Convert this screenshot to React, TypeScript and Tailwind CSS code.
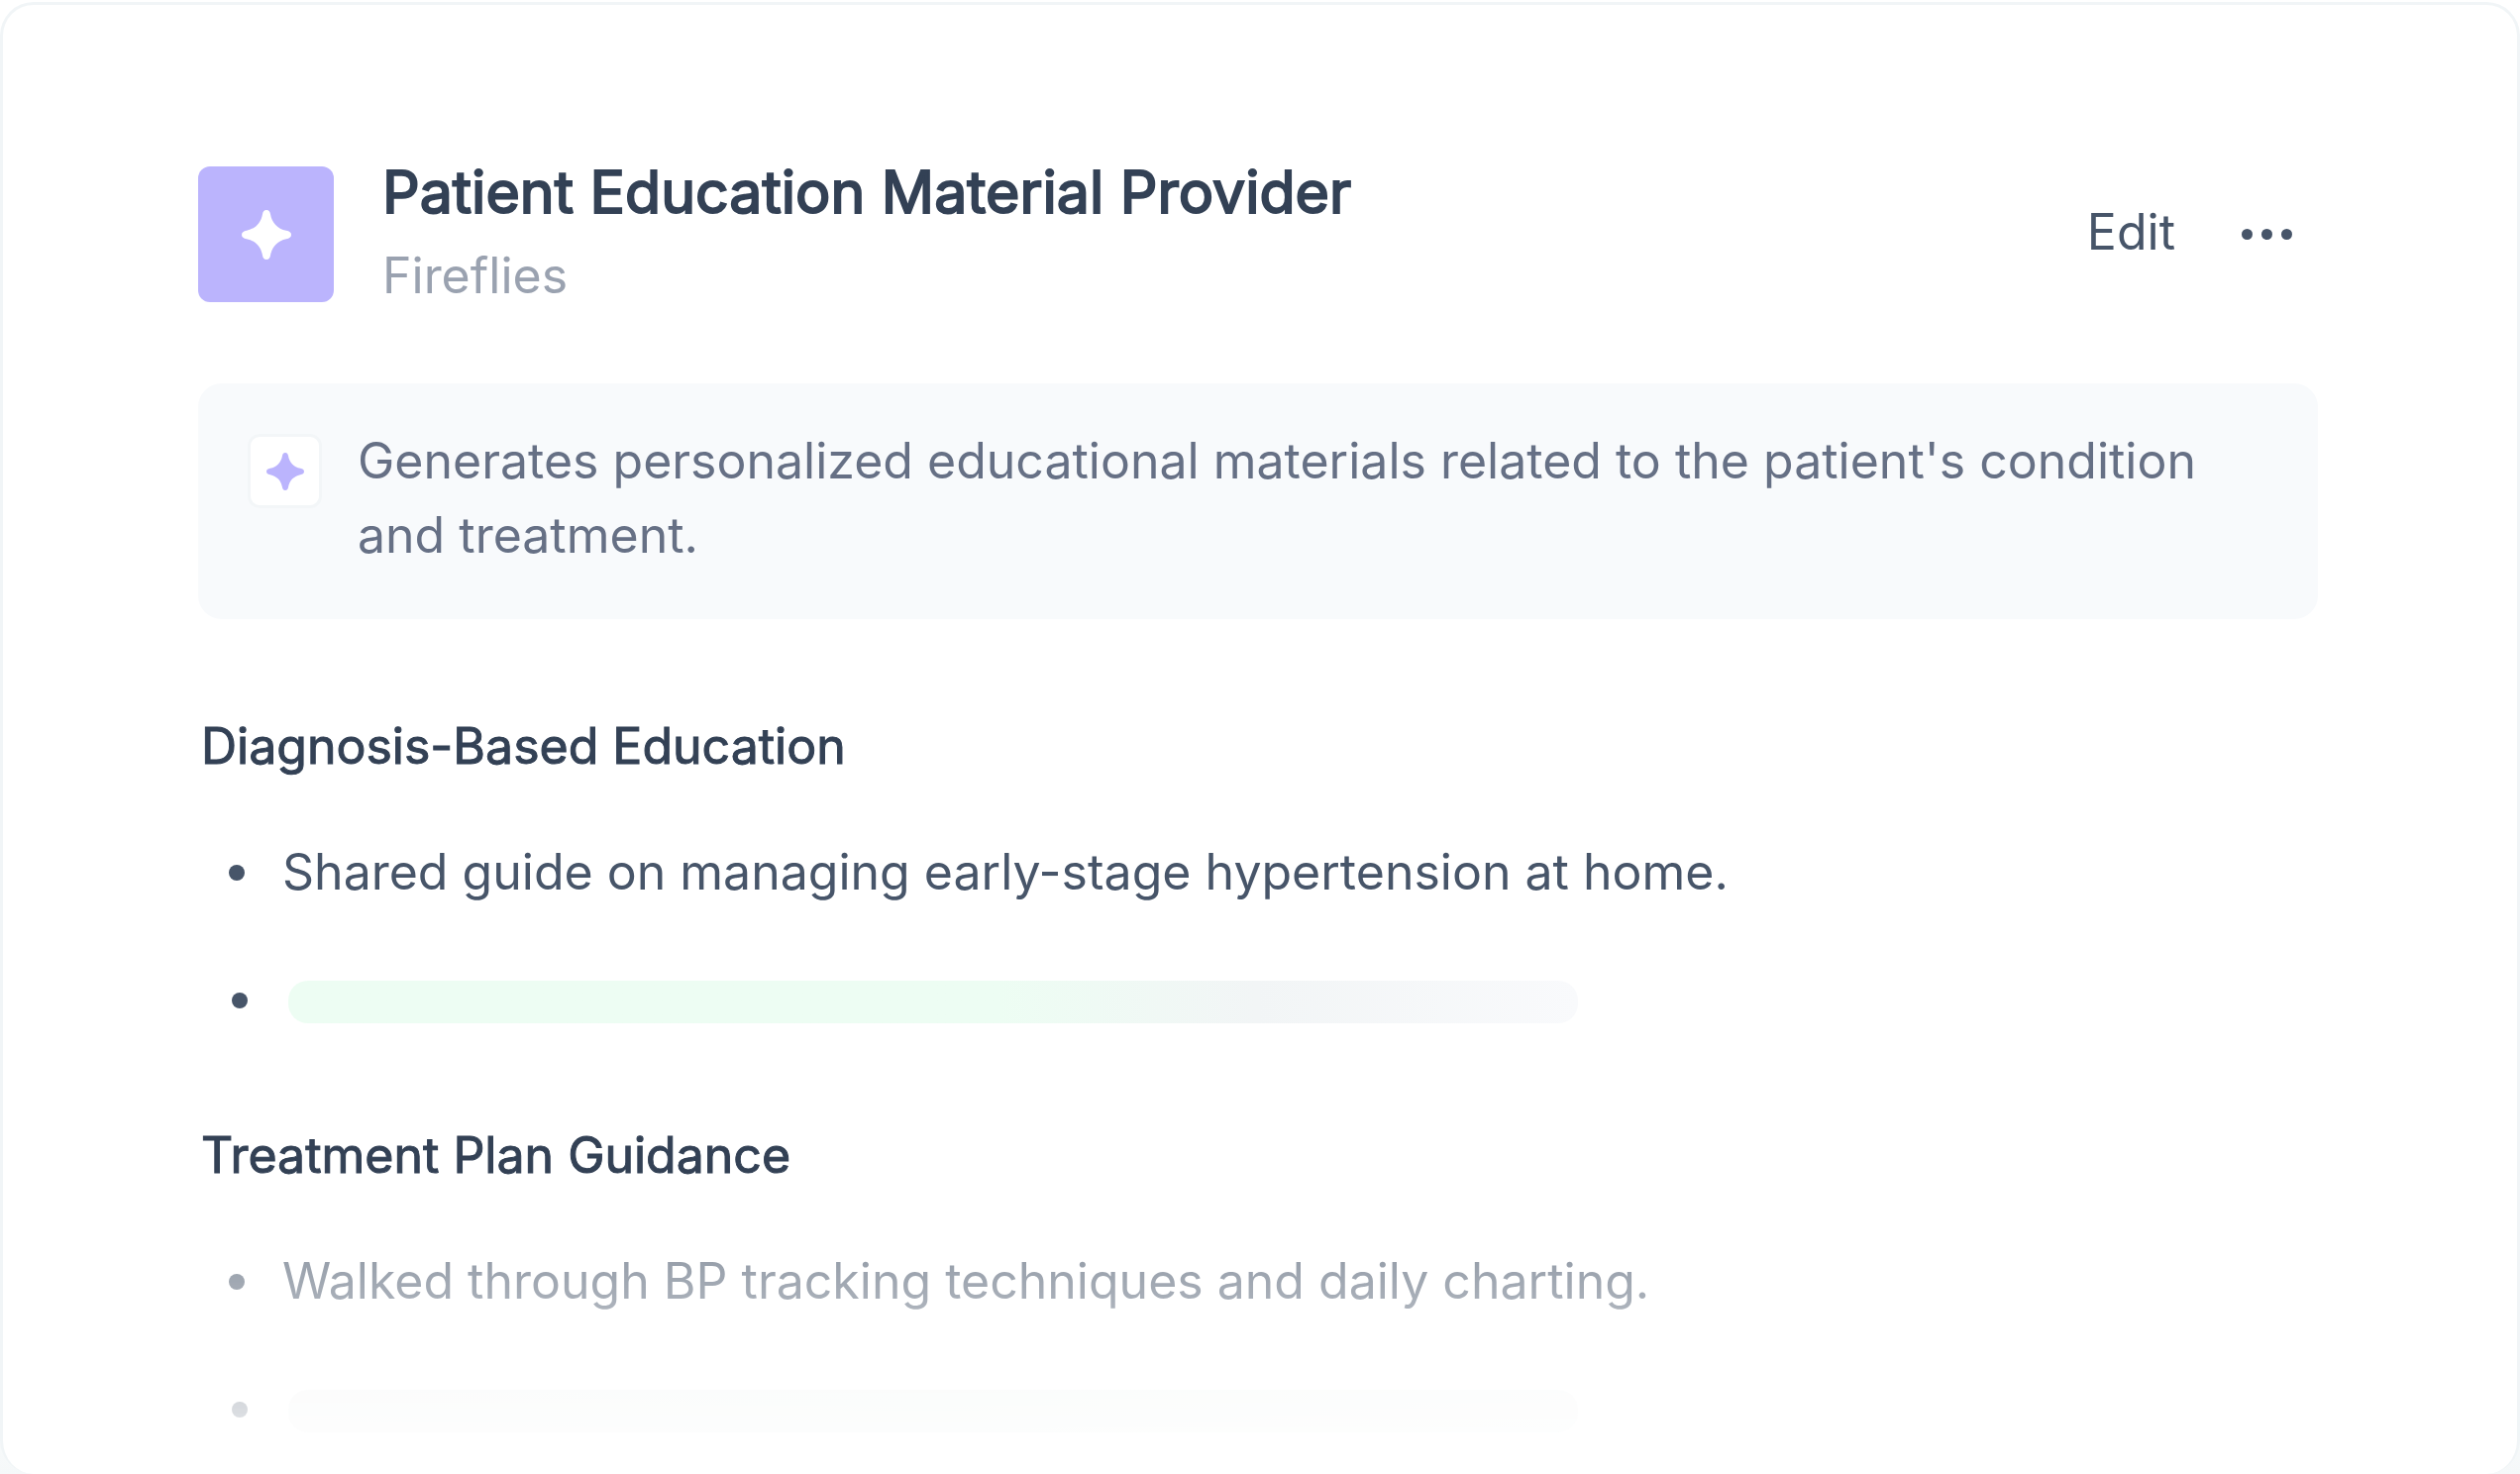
import type { ReactNode } from 'react';

const sections = [
  {
    title: 'Diagnosis-Based Education',
    item: 'Shared guide on managing early-stage hypertension at home.',
    faded: false,
  },
  {
    title: 'Treatment Plan Guidance',
    item: 'Walked through BP tracking techniques and daily charting.',
    faded: true,
  },
];

function Spark({ className }: { className: string }) {
  return (
    <svg viewBox="0 0 50 50" className={className} fill="currentColor" aria-hidden="true">
      <path d="M25 0C27.6 0 28.6 1.8 29 4.2C30.6 13 36 18.8 45 20.8C48 21.4 50 22.5 50 25C50 27.5 48 28.6 45 29.2C36 31.2 30.6 37 29 45.8C28.6 48.2 27.6 50 25 50C22.4 50 21.4 48.2 21 45.8C19.4 37 14 31.2 5 29.2C2 28.6 0 27.5 0 25C0 22.5 2 21.4 5 20.8C14 18.8 19.4 13 21 4.2C21.4 1.8 22.4 0 25 0Z" />
    </svg>
  );
}

function Bullet() {
  return <span className="size-4 shrink-0 rounded-full bg-[#475569]" />;
}

function Item({ children }: { children: ReactNode }) {
  return (
    <li className="flex items-center gap-[38px] pl-[31px]">
      <Bullet />
      <span>{children}</span>
    </li>
  );
}

// line that is still being written
function LoadingItem({ faded }: { faded: boolean }) {
  return (
    <li className="flex h-[75px] items-center gap-[41px] pl-[34px]">
      <Bullet />
      <span
        className={`mt-1 h-[43px] w-[1302px] rounded-[20px] ${
          faded
            ? 'bg-linear-to-r from-[#f2f4f4] via-[#eef5f1] to-[#f5f7f7]'
            : 'bg-linear-to-r from-[#edfdf3] from-55% via-[#f2f5f6] via-75% to-[#f9fafc]'
        }`}
      />
    </li>
  );
}

export default function App() {
  return (
    <div className="flex min-h-screen flex-col bg-linear-to-b from-white from-90% to-[#f5f8f9] pt-[2px] font-['Inter',sans-serif] [font-optical-sizing:none]">
      <main className="flex-1 rounded-[34px] border-[3px] border-b-0 border-[#f1f5f7] bg-white pt-[152px] pr-[201px] pl-[197px] text-[50px] leading-[75px] text-[#475569]">
        <header className="flex items-center">
          <div className="flex size-[137px] shrink-0 items-center justify-center rounded-xl bg-[#bbb4fd] text-white">
            <Spark className="size-[50px]" />
          </div>
          <div className="ml-[49px] flex-1">
            <h1 className="text-[59px] leading-[74px] text-[#334155] [-webkit-text-stroke:2px]">
              Patient Education Material Provider
            </h1>
            <p className="mt-[10px] text-[#9aa2b0]">Fireflies</p>
          </div>
          <button type="button" className="mr-[67px] pb-1">Edit</button>
          <button type="button" aria-label="More options" className="mr-[26px] flex gap-[9px]">
            <span className="size-[11px] rounded-full bg-[#475569]" />
            <span className="size-[11px] rounded-full bg-[#475569]" />
            <span className="size-[11px] rounded-full bg-[#475569]" />
          </button>
        </header>

        <div className="mt-[71px] mb-[91px] flex items-start gap-9 rounded-3xl bg-[#f8fafc] pt-[41px] pr-20 pb-[47px] pl-[50px]">
          <div className="mt-[10px] flex size-[75px] shrink-0 items-center justify-center rounded-xl border-[3px] border-[#f3f6f8] bg-white text-[#bbb4fd]">
            <Spark className="size-[38px]" />
          </div>
          <p className="text-[#667085]">
            Generates personalized educational materials related to the patient's condition and treatment.
          </p>
        </div>

        {sections.map((s) => (
          <section key={s.title} className="mb-[82px] last:mb-0">
            <h2 className="pl-[3px] text-[#334155] [-webkit-text-stroke:1px]">{s.title}</h2>
            <ul
              className={`mt-[52px] flex flex-col gap-[54px] ${
                s.faded ? '[mask-image:linear-gradient(to_bottom,rgba(0,0,0,0.6),rgba(0,0,0,0.12))]' : ''
              }`}
            >
              <Item>{s.item}</Item>
              <LoadingItem faded={s.faded} />
            </ul>
          </section>
        ))}
      </main>
    </div>
  );
}
